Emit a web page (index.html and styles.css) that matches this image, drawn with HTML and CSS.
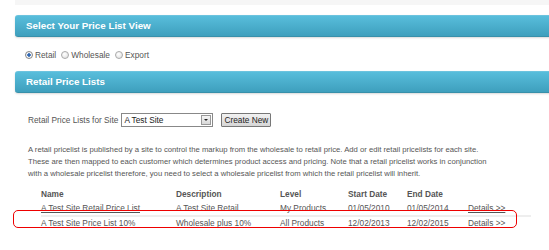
FILE: index.html
```html
<!DOCTYPE html>
<html lang="en">
<head>
    <meta charset="UTF-8">
    <title>Price Lists</title>
    <link rel="stylesheet" href="styles.css">
</head>
<body>
    <div class="page">
        <div class="topband"></div>

        <div class="panel-head">Select Your Price List View</div>
        <div class="views">
            <label><input type="radio" name="view" checked> Retail</label>
            <label><input type="radio" name="view"> Wholesale</label>
            <label><input type="radio" name="view"> Export</label>
        </div>

        <div class="panel-head">Retail Price Lists</div>
        <div class="site-row">
            <span class="site-label">Retail Price Lists for Site</span>
            <span class="combo">
                <select>
                    <option>A Test Site</option>
                </select>
                <span class="combo-arrow"></span>
            </span>
            <button type="button">Create New</button>
        </div>

        <p class="intro">A retail pricelist is published by a site to control the markup from the wholesale to retail price. Add or edit retail pricelists for each site. These are then mapped to each customer which determines product access and pricing. Note that a retail pricelist works in conjunction with a wholesale pricelist therefore, you need to select a wholesale pricelist from which the retail pricelist will inherit.</p>

        <table class="lists">
            <thead>
                <tr>
                    <th class="c-name">Name</th>
                    <th class="c-desc">Description</th>
                    <th class="c-level">Level</th>
                    <th class="c-start">Start Date</th>
                    <th class="c-end">End Date</th>
                    <th class="c-det"></th>
                </tr>
            </thead>
            <tbody>
                <tr>
                    <td><a href="#">A Test Site Retail Price List</a></td>
                    <td>A Test Site Retail</td>
                    <td>My Products</td>
                    <td>01/05/2010</td>
                    <td>01/05/2014</td>
                    <td><a href="#">Details &gt;&gt;</a></td>
                </tr>
                <tr class="marked">
                    <td><a href="#">A Test Site Price List 10%</a></td>
                    <td>Wholesale plus 10%</td>
                    <td>All Products</td>
                    <td>12/02/2013</td>
                    <td>12/02/2015</td>
                    <td><a href="#">Details &gt;&gt;</a></td>
                </tr>
            </tbody>
        </table>
        <div class="highlight"></div>
    </div>
</body>
</html>
```

FILE: styles.css
```css
body {
    margin: 0;
    font-family: "Liberation Sans", Arial, sans-serif;
    font-size: 8.3px;
    color: #555;
    background-color: #fff;
    overflow: hidden;
}
.page {
    position: relative;
    padding-left: 15px;
}
.topband {
    height: 5px;
    background-color: #f6f6f6;
}
.panel-head {
    margin-top: 10px;
    margin-right: -10px;
    height: 20px;
    line-height: 20px;
    padding-left: 11px;
    color: #fff;
    font-weight: bold;
    font-size: 9.8px;
    background: linear-gradient(#58bddb, #3e9fbd);
    border-top: 1px solid #6cc3de;
    border-bottom: 1px solid #3890aa;
    border-radius: 3px 0 0 3px;
    box-shadow: 0 1px 2px rgba(0, 0, 0, 0.15);
}
.views {
    display: flex;
    gap: 5px;
    padding: 12px 0 0 10px;
    height: 24px;
    box-sizing: border-box;
    align-items: center;
}
.views label {
    display: flex;
    align-items: center;
    gap: 2px;
}
.views input {
    appearance: none;
    margin: 0;
    width: 8px;
    height: 8px;
    border: 1px solid #aaa;
    border-radius: 50%;
    background: radial-gradient(circle at 40% 35%, #fff, #ddd);
    box-sizing: border-box;
}
.views input:checked {
    background: radial-gradient(circle, #2a5fa8 0, #3a6fb8 1.5px, #fff 2px, #ddd);
    border-color: #888;
}
.site-row {
    display: flex;
    align-items: center;
    height: 14px;
    padding: 20px 0 0 13px;
}
.site-label {
    margin-right: 3px;
}
.combo {
    display: inline-flex;
    align-items: center;
    width: 92px;
    height: 14px;
    box-sizing: border-box;
    border: 1px solid #888;
    background-color: #fff;
}
.combo select {
    appearance: none;
    flex: 1;
    min-width: 0;
    border: none;
    outline: none;
    background: none;
    padding: 0 0 0 2px;
    margin: 0;
    height: 12px;
    font-family: "Liberation Sans", Arial, sans-serif;
    font-size: 8.3px;
    color: #222;
}
.combo-arrow {
    position: relative;
    width: 8px;
    height: 8px;
    margin-right: 1px;
    border: 1px solid #999;
    background: linear-gradient(#f6f6f6, #d8d8d8);
}
.combo-arrow::after {
    content: "";
    position: absolute;
    left: 2px;
    top: 3px;
    border-left: 2px solid transparent;
    border-right: 2px solid transparent;
    border-top: 2px solid #222;
}
button {
    margin-left: 8px;
    width: 50px;
    height: 14px;
    padding: 0;
    font-family: "Liberation Sans", Arial, sans-serif;
    font-size: 8.3px;
    line-height: 12px;
    color: #222;
    border: 1px solid #777;
    border-radius: 1px;
    background: linear-gradient(#f2f2f2, #d6d6d6);
}
.intro {
    margin: 17px 0 0 13px;
    width: 464px;
    font-size: 7.7px;
    line-height: 12px;
}
.lists {
    margin: 7px 0 0 26px;
    border-collapse: collapse;
    width: 490px;
}
.lists th,
.lists td {
    padding: 0;
    text-align: left;
    white-space: nowrap;
    height: 14px;
    line-height: 12px;
}
.lists th {
    font-weight: bold;
}
.c-name { width: 135px; }
.c-desc { width: 104px; }
.c-level { width: 68px; }
.c-start { width: 59px; }
.c-end { width: 61px; }
.lists a {
    color: #555;
}
.lists tr.marked td {
    border-top: 2px solid #eee;
    height: 12px;
}
.highlight {
    position: absolute;
    left: 13px;
    top: 210px;
    width: 504px;
    height: 18px;
    box-sizing: border-box;
    border: 1.5px solid #e00;
    border-radius: 5px;
}
```
